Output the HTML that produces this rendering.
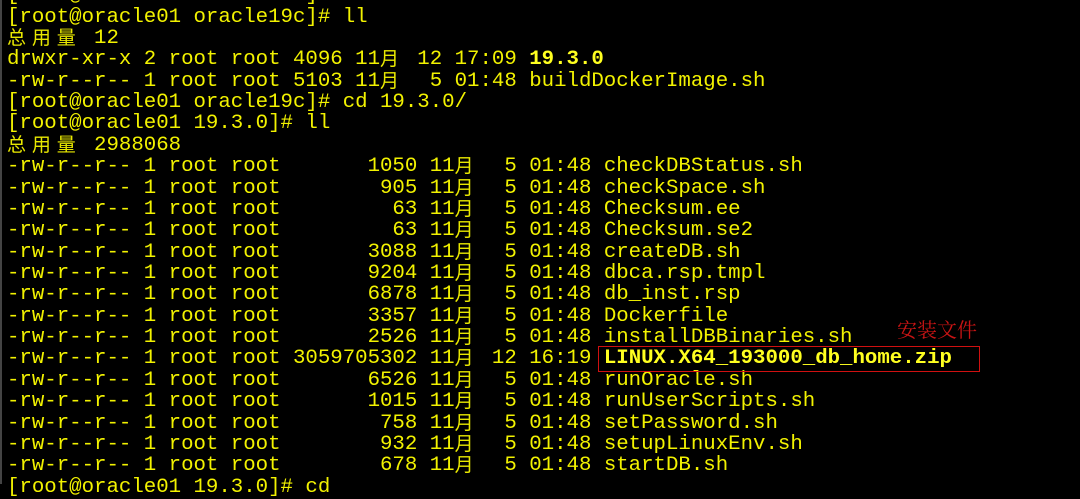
<!DOCTYPE html>
<html><head><meta charset="utf-8"><style>
html,body{margin:0;padding:0;background:#000;width:1080px;height:484px;overflow:hidden}
.t{position:absolute;left:7px;top:-14.7px;margin:0;font-family:"Liberation Mono",monospace;font-size:20.73px;color:#f2f200}
.t div{height:21.36px;line-height:21.36px;white-space:pre}
.c{display:inline-block;width:24.88px;height:21.36px;line-height:19px;vertical-align:top;position:relative;top:-1px;font-family:"Noto Sans CJK SC",sans-serif;font-size:19px;color:#e8e800}
b{font-weight:bold;color:#ffff20}
.box{position:absolute;left:598px;top:346px;width:380px;height:24px;border:1px solid #d01010}
.note{position:absolute;left:897px;top:316px;font-family:"Noto Serif CJK SC",serif;font-size:20px;line-height:26px;color:#c81414}
.edge{position:absolute;left:0;top:0;width:2px;height:484px;background:#444}
</style></head><body>
<div class="t"><div>[root@oracle01 oracle19c]# ll</div><div>[root@oracle01 oracle19c]# ll</div><div><span class="c">总</span><span class="c">用</span><span class="c">量</span> 12</div><div>drwxr-xr-x 2 root root 4096 11<span class="c">月</span> 12 17:09 <b>19.3.0</b></div><div>-rw-r--r-- 1 root root 5103 11<span class="c">月</span>  5 01:48 buildDockerImage.sh</div><div>[root@oracle01 oracle19c]# cd 19.3.0/</div><div>[root@oracle01 19.3.0]# ll</div><div><span class="c">总</span><span class="c">用</span><span class="c">量</span> 2988068</div><div>-rw-r--r-- 1 root root       1050 11<span class="c">月</span>  5 01:48 checkDBStatus.sh</div><div>-rw-r--r-- 1 root root        905 11<span class="c">月</span>  5 01:48 checkSpace.sh</div><div>-rw-r--r-- 1 root root         63 11<span class="c">月</span>  5 01:48 Checksum.ee</div><div>-rw-r--r-- 1 root root         63 11<span class="c">月</span>  5 01:48 Checksum.se2</div><div>-rw-r--r-- 1 root root       3088 11<span class="c">月</span>  5 01:48 createDB.sh</div><div>-rw-r--r-- 1 root root       9204 11<span class="c">月</span>  5 01:48 dbca.rsp.tmpl</div><div>-rw-r--r-- 1 root root       6878 11<span class="c">月</span>  5 01:48 db_inst.rsp</div><div>-rw-r--r-- 1 root root       3357 11<span class="c">月</span>  5 01:48 Dockerfile</div><div>-rw-r--r-- 1 root root       2526 11<span class="c">月</span>  5 01:48 installDBBinaries.sh</div><div>-rw-r--r-- 1 root root 3059705302 11<span class="c">月</span> 12 16:19 <b>LINUX.X64_193000_db_home.zip</b></div><div>-rw-r--r-- 1 root root       6526 11<span class="c">月</span>  5 01:48 runOracle.sh</div><div>-rw-r--r-- 1 root root       1015 11<span class="c">月</span>  5 01:48 runUserScripts.sh</div><div>-rw-r--r-- 1 root root        758 11<span class="c">月</span>  5 01:48 setPassword.sh</div><div>-rw-r--r-- 1 root root        932 11<span class="c">月</span>  5 01:48 setupLinuxEnv.sh</div><div>-rw-r--r-- 1 root root        678 11<span class="c">月</span>  5 01:48 startDB.sh</div><div>[root@oracle01 19.3.0]# cd</div></div>
<div class="box"></div>
<div class="note">安装文件</div>
<div class="edge"></div>
</body></html>
